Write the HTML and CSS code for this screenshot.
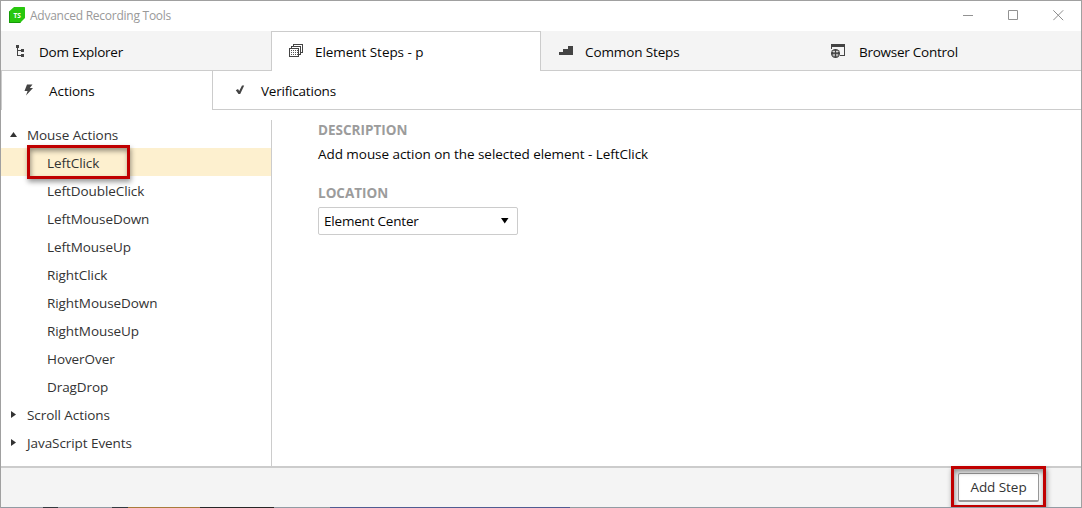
FILE: index.html
```html
<!DOCTYPE html>
<html lang="en">
<head>
<meta charset="utf-8">
<title>Advanced Recording Tools</title>
<link rel="stylesheet" href="styles.css">
</head>
<body>
<div class="window">
  <header class="titlebar">
    <svg class="logo" width="16" height="16" viewBox="0 0 16 16"><path d="M5 0H15.500Q16 0 16 .5V11L11 16H.5Q0 16 0 15.500V4.500Z" fill="#28c70e"/><path d="M0 5V15.500Q0 16 .5 16H11L12 15H1V4Z" fill="#159a08"/><text x="8.2" y="10.5" text-anchor="middle" class="logo-text">TS</text></svg>
    <span class="title">Advanced Recording Tools</span>
    <div class="controls">
      <svg width="11" height="11" viewBox="0 0 11 11"><path d="M0 5.5H10" stroke="#929292" fill="none"/></svg>
      <svg width="11" height="11" viewBox="0 0 11 11"><path d="M.5 .5H9.5V9.5H.5Z" stroke="#929292" fill="none"/></svg>
      <svg width="11" height="11" viewBox="0 0 11 11"><path d="M.3 .3L10.2 10.2M10.2 .3L.3 10.2" stroke="#8c8c8c" fill="none"/></svg>
    </div>
  </header>
  <nav class="tabs">
    <div class="tab tab-dom">
      <svg width="18" height="16" viewBox="0 0 18 16" shape-rendering="crispEdges"><path d="M1 2H4V5H1ZM2 5H3V13H2ZM3 7H6V8H3ZM3 12H6V13H3ZM6 6H9V9H6ZM6 11H9V14H6Z" fill="#444"/></svg>
      <span class="label">Dom Explorer</span>
    </div>
    <div class="tab active">
      <svg width="16" height="16" viewBox="0 0 16 16" shape-rendering="crispEdges"><path d="M4.5 3V1.5H13.500V9.500H12M2.500 5V3.500H11.500V11.500H10M.5 5.500H9.500V13.500H.5Z" stroke="#444" fill="none"/><path d="M2 7h1v1h-1zM4 7h1v1h-1zM6 7h1v1h-1zM8 7h1v1h-1zM2 9h1v1h-1zM4 9h1v1h-1zM6 9h1v1h-1zM8 9h1v1h-1zM2 11h1v1h-1zM4 11h1v1h-1zM6 11h1v1h-1zM8 11h1v1h-1z" fill="#555"/></svg>
      <span class="label">Element Steps - p</span>
    </div>
    <div class="tab tab-common">
      <svg width="16" height="16" viewBox="0 0 16 16" shape-rendering="crispEdges"><path d="M0 12V9H4V6H9V3H14V12Z" fill="#444"/></svg>
      <span class="label">Common Steps</span>
    </div>
    <div class="tab tab-browser">
      <svg width="16" height="16" viewBox="0 0 16 16"><path d="M0 1H14V13H9V12H13V4H1V6H0Z" fill="#444"/><circle cx="4.500" cy="10.500" r="4.500" fill="#444"/><path d="M1.500 8.500H7.500M1.500 12H7.500M3 7.500V13.500M6 7.500V13.500" stroke="#e0e0e0" stroke-width=".9"/><path d="M4.500 6V15M0 10.300H9" stroke="#444"/></svg>
      <span class="label">Browser Control</span>
    </div>
  </nav>
  <nav class="subtabs">
    <div class="subtab selected">
      <svg width="16" height="16" viewBox="0 0 16 16"><path d="M4 2.500H9.500L6.800 6H10L3 13.500L4.600 9H1.500Z" fill="#444"/></svg>
      <span class="label">Actions</span>
    </div>
    <div class="subtab rest">
      <svg width="16" height="16" viewBox="0 0 16 16"><path d="M.8 8.200L3 7L4.200 8.900L7 3.500H9.200L5.200 12H3.500Z" fill="#444"/></svg>
      <span class="label">Verifications</span>
    </div>
  </nav>
  <main class="content">
    <aside class="tree">
      <div class="row group"><svg width="8" height="8" viewBox="0 0 8 8"><path d="M0 7L3.500 2L7 7Z" fill="#333"/></svg><span>Mouse Actions</span></div>
      <div class="row item current"><span>LeftClick</span><div class="callout callout-item"></div></div>
      <div class="row item"><span>LeftDoubleClick</span></div>
      <div class="row item"><span>LeftMouseDown</span></div>
      <div class="row item"><span>LeftMouseUp</span></div>
      <div class="row item"><span>RightClick</span></div>
      <div class="row item"><span>RightMouseDown</span></div>
      <div class="row item"><span>RightMouseUp</span></div>
      <div class="row item"><span>HoverOver</span></div>
      <div class="row item"><span>DragDrop</span></div>
      <div class="row group"><svg width="8" height="8" viewBox="0 0 8 8"><path d="M1 1L6 4.500L1 8Z" fill="#333"/></svg><span>Scroll Actions</span></div>
      <div class="row group"><svg width="8" height="8" viewBox="0 0 8 8"><path d="M1 1L6 4.500L1 8Z" fill="#333"/></svg><span>JavaScript Events</span></div>
    </aside>
    <section class="details">
      <h2>DESCRIPTION</h2>
      <p class="desc">Add mouse action on the selected element - LeftClick</p>
      <h2>LOCATION</h2>
      <div class="select"><span>Element Center</span><svg width="8" height="6" viewBox="0 0 8 6"><path d="M0 0H7.500L3.750 5.500Z" fill="#000"/></svg></div>
    </section>
  </main>
  <footer class="footer">
    <div class="button"><span>Add Step</span></div>
    <div class="callout callout-button"></div>
  </footer>
</div>
</body>
</html>
```
FILE: styles.css
```css
* { box-sizing: border-box; }
body { margin: 0; font: 13.5px/20px "Open Sans", "Noto Sans", sans-serif; letter-spacing: -.05px; color: #080808; background: #fff; }
svg { display: block; flex: none; }
span, p, h2 { white-space: nowrap; }
.window { position: relative; width: 1082px; height: 508px; border: 1px solid #a0a0a0; border-bottom: 0; display: flex; flex-direction: column; overflow: hidden; }
.window::after { content: ""; position: absolute; left: 0; right: 0; bottom: 0; height: 1px; background: linear-gradient(90deg, #929ba3 0 42px, #333a40 42px 57px, #929ba3 57px 111px, #333a40 111px 127px, #a87b3c 127px 199px, #272727 199px 273px, #929ba3 273px 329px, #505c91 329px 569px, #929ba3 569px); }
.titlebar { height: 30px; flex: none; display: flex; align-items: center; padding: 0 17px 0 8px; }
.logo { margin-top: -2px; }
.logo-text { font: bold 6.5px "Open Sans", sans-serif; fill: #fff; letter-spacing: 0; }
.title { margin: -1px 0 0 5px; font-size: 12px; letter-spacing: -.25px; color: #999; }
.controls { display: flex; gap: 35px; margin: -2px 1px 0 auto; }
.controls svg:nth-child(2) { margin: 0 -1px 0 -1px; }
.controls svg:nth-child(3) { margin-right: -1px; }
.tabs { height: 40px; flex: none; display: grid; grid-template-columns: 270px 270px 270px 1fr; }
.tab { display: flex; align-items: center; background: #f4f4f4; border-bottom: 1px solid #ccc; padding-left: 17px; padding-top: 2px; }
.tab svg { margin-top: -2px; }
.tab .label { margin-left: 10px; }
.tab-dom { padding-left: 14px; letter-spacing: -.25px; }
.tab-dom .label { margin-left: 6px; }
.tab.active { background: #fff; border: 1px solid #ccc; border-bottom: 0; padding-top: 0; }
.tab.active svg { margin-top: -1px; }
.tab-common { padding-left: 18px; letter-spacing: -.12px; }
.tab-browser { padding-left: 20px; letter-spacing: -.25px; }
.tab-browser .label { margin-left: 12px; }
.subtabs { height: 39px; flex: none; display: flex; }
.subtab { display: flex; align-items: center; padding-top: 2px; }
.subtab svg { margin-top: -2px; }
.selected { width: 211px; border-left: 1px solid #ccc; padding: 1px 0 0 21px; }
.subtab .label { margin-left: 10px; }
.rest { flex: 1; border-left: 1px solid #ccc; border-bottom: 1px solid #ccc; padding-left: 22px; letter-spacing: -.2px; }
.content { height: 356px; flex: none; display: flex; padding-top: 10px; }
.tree { width: 271px; border-right: 1px solid #ccc; color: #333; letter-spacing: -.07px; }
.row { position: relative; height: 28px; display: flex; align-items: center; padding-top: 2px; }
.group { padding-left: 9px; }
.group span { margin-left: 9px; }
.group svg { margin-top: -2px; }
.item { padding-left: 46px; }
.current { background: #fdf0cf; }
.callout { position: absolute; border: 3px solid #c00000; box-shadow: 1px 3px 5px rgba(0,0,0,.4), inset 1px 3px 5px rgba(0,0,0,.4); }
.callout-item { left: 26px; top: -3px; width: 103px; height: 34px; }
.details { padding-left: 46px; }
h2 { margin: 0; font-size: 13.5px; line-height: 20px; font-weight: 700; letter-spacing: 0; color: #9c9c9c; }
.desc { margin: 4px 0 19px; }
.select { width: 200px; height: 28px; margin-top: 4px; border: 1px solid #ccc; border-radius: 2px; display: flex; align-items: center; justify-content: space-between; padding: 0 8px 0 5px; letter-spacing: -.2px; }
.select svg { margin-top: -1px; }
.footer { position: relative; height: 42px; flex: none; background: #f4f4f4; border-top: 2px solid #ccc; display: flex; justify-content: flex-end; padding: 5px 42px 0 0; }
.button { width: 81px; height: 29px; border: 1px solid #999; border-bottom-width: 2px; border-radius: 2px; background: #fff; color: #333; display: flex; align-items: center; justify-content: center; }
.callout-button { right: 35px; top: -2px; width: 95px; height: 42px; }
```
